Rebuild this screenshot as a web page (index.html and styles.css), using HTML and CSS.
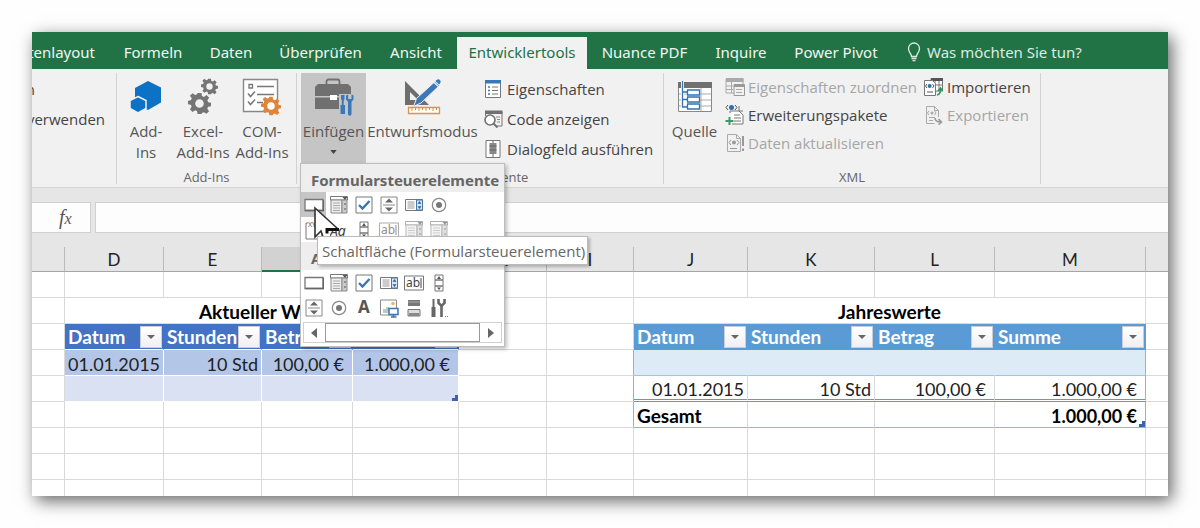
FILE: index.html
```html
<!DOCTYPE html>
<html lang="de">
<head>
<meta charset="utf-8">
<title>Entwicklertools</title>
<link rel="stylesheet" href="styles.css">
</head>
<body>
<svg class="defs" aria-hidden="true">
  <symbol id="i-button" viewBox="0 0 20 20"><path d="M1 4.500h18v11H1z" fill="#fff" stroke="#777" stroke-width="1.300"/><path d="M1.500 15.500h18V5" fill="none" stroke="#666" stroke-width="1.600"/></symbol>
  <symbol id="i-combo" viewBox="0 0 20 20"><path d="M1.500 1.500h17v3.500h-17z" fill="#fff" stroke="#777"/><path d="M2 5h11v13H2z" fill="#eee" stroke="#888"/><path d="M13 5h5v13h-5z" fill="#ccc" stroke="#888"/><path d="M4 8h7M4 10.500h7M4 13h7M4 15.500h7" stroke="#aaa"/><path d="M13.500 2h5l-2.500 3z" fill="#555"/><path d="M15 9h2M15 14h2" stroke="#555"/></symbol>
  <symbol id="i-check" viewBox="0 0 20 20"><path d="M2 2h16v16H2z" fill="#fff" stroke="#777"/><path d="M5 10l3.500 3.500L15.500 6" fill="none" stroke="#3a76b5" stroke-width="2.400"/></symbol>
  <symbol id="i-spin" viewBox="0 0 20 20"><path d="M2 2h16v16H2z" fill="#fff" stroke="#888"/><path d="M4 10h12" stroke="#888"/><path d="M6 7.500h8L10 3.500zM6 12.500h8l-4 4z" fill="#666"/></symbol>
  <symbol id="i-list" viewBox="0 0 20 20"><path d="M1.500 4.500h17v11h-17z" fill="#fff" stroke="#777"/><path d="M3.500 7h7M3.500 9h7M3.500 11h7M3.500 13h7" stroke="#999"/><path d="M12.500 5h6v10h-6z" fill="#d9e6f3" stroke="#4379ad"/><path d="M13.500 8.800h4L15.500 6zM13.500 11.200h4l-2 2.800z" fill="#2d6299"/></symbol>
  <symbol id="i-radio" viewBox="0 0 20 20"><circle cx="10" cy="10" r="6.700" fill="#fff" stroke="#888" stroke-width="1.200"/><circle cx="10" cy="10" r="3" fill="#777"/></symbol>
  <symbol id="i-group" viewBox="0 0 20 20"><path d="M4 3H2v16h16V3h-5" fill="none" stroke="#777"/><text x="4" y="7" class="glyph-xyz">XYZ</text></symbol>
  <symbol id="i-label" viewBox="0 0 20 20"><text x="1" y="16" class="glyph-aa">Aa</text></symbol>
  <symbol id="i-scroll" viewBox="0 0 20 20"><path d="M6 2h8v5H6zM6 7h8v6H6zM6 13h8v5H6z" fill="#fff" stroke="#777"/><path d="M8 6h4l-2-3zM8 14.500h4l-2 2.500z" fill="#555"/></symbol>
  <symbol id="i-text" viewBox="0 0 20 20"><path d="M.500 3h19v14H.5z" fill="#fff" stroke="#777"/><text x="2" y="14" class="glyph-abl">ab</text><path d="M17 5v10" stroke="#444"/></symbol>
  <symbol id="i-a" viewBox="0 0 20 20"><text x="4" y="15" class="glyph-a">A</text></symbol>
  <symbol id="i-image" viewBox="0 0 20 20"><path d="M1.500 2h16v15h-16z" fill="#fff" stroke="#888"/><path d="M4 15v-4h3V9h3v6z" fill="#b9c9c3"/><circle cx="14" cy="5.500" r="1.800" fill="#e9b566"/><path d="M10 10.500h9v6h-9z" fill="#fff" stroke="#3b76b0" stroke-width="1.500"/><path d="M14.500 17v2M12 19h5.500" stroke="#3b76b0" stroke-width="1.500"/></symbol>
  <symbol id="i-toggle" viewBox="0 0 20 20"><path d="M4 2h12v6H4z" fill="#777"/><path d="M4 4h12" stroke="#aaa"/><path d="M4 11.500h12v6.500H4z" fill="#ddd" stroke="#777"/><path d="M5 15h10v3H5z" fill="#888"/></symbol>
  <symbol id="i-tools" viewBox="0 0 20 20"><path d="M3.500 1h2v8h-2z" fill="#666"/><path d="M2.500 9h4v10h-4z" fill="#666"/><path d="M9.500 1v4l3 3 3-3V1M12.500 7v12" fill="none" stroke="#666" stroke-width="2.600"/><path d="M16 18.500h1M18 18.500h1" stroke="#777"/></symbol>
  <symbol id="i-gear" viewBox="-12 -12 24 24"><path d="M-2-11h4l.6 3.300 2 .8 2.800-1.900 2.700 2.800-1.900 2.700.8 2 3 .5v3.600l-3 .6-.9 2 1.900 2.700-2.700 2.700-2.700-1.800-2 .8L2 11h-4l-.6-3.200-2-.8-2.700 1.800L-10 6.100l1.800-2.700-.8-2-3-.6v-3.600l3-.6.9-2-1.900-2.700 2.700-2.700 2.700 1.900 2-.8zM0-4.500A4.500 4.500 0 1 0 0 4.500 4.500 4.500 0 1 0 0-4.500z" fill="currentColor" fill-rule="evenodd"/></symbol>
</svg>

<div class="window">
  <nav class="tabs">
    <button class="tab tab-cut">tenlayout</button>
    <button class="tab">Formeln</button>
    <button class="tab">Daten</button>
    <button class="tab">Überprüfen</button>
    <button class="tab">Ansicht</button>
    <button class="tab active">Entwicklertools</button>
    <button class="tab">Nuance PDF</button>
    <button class="tab">Inquire</button>
    <button class="tab">Power Pivot</button>
    <button class="tab tell-me">
      <svg width="14" height="20" viewBox="0 0 14 20" fill="none" stroke="#dcebe2" stroke-width="1.300"><path d="M4.500 14.500c0-3-3-4-3-8a5.500 5.500 0 0 1 11 0c0 4-3 5-3 8zM4.500 16.500h5M5.500 18.700h3"/></svg>
      Was möchten Sie tun?
    </button>
  </nav>

  <section class="ribbon">
    <div class="group g-code">
      <div class="cut-list"><span>n</span><span>verwenden</span></div>
    </div>

    <div class="group g-addins">
      <div class="tools">
        <button class="big b-add">
          <span class="pic"><svg width="32" height="34" viewBox="0 0 32 34"><path d="M18 1l13 6.500v15L18 30l-13-7V8z" fill="#0c72c6"/><path d="M8 16.500l8 4v8L8 33l-8-4.500v-8z" fill="#0c72c6" stroke="#f1f1f1" stroke-width="1.500"/></svg></span>
          Add-<br>Ins
        </button>
        <button class="big b-excel">
          <span class="pic"><svg width="32" height="38" viewBox="0 0 32 38" color="#757575"><use href="#i-gear" x="1" y="14" width="23" height="23"/><use href="#i-gear" x="14" y="0" width="17" height="17"/></svg></span>
          Excel-<br>Add-Ins
        </button>
        <button class="big b-com">
          <span class="pic"><svg width="40" height="38" viewBox="0 0 40 38"><path d="M1.500 1.500h34v32h-34z" fill="#fff" stroke="#888" stroke-width="1.400"/><path d="M7 6.500h3.500V10H7zM15 8.500h17M15 16.500h17M15 24.500h6" fill="none" stroke="#777" stroke-width="1.300"/><path d="M6 15.500l2.500 3 4.500-5M6 23.500l2.500 3 4.500-5" fill="none" stroke="#777" stroke-width="1.500"/><circle cx="29" cy="28" r="5" fill="#fff"/><g color="#e0843a"><use href="#i-gear" x="19" y="18" width="20" height="20"/></g></svg></span>
          COM-<br>Add-Ins
        </button>
      </div>
      <div class="caption">Add-Ins</div>
    </div>

    <div class="group g-controls">
      <div class="tools">
        <button class="big b-insert pressed">
          <span class="pic"><svg width="40" height="38" viewBox="0 0 40 38"><path d="M12.500 6V3.500a2 2 0 0 1 2-2h9a2 2 0 0 1 2 2V6" fill="none" stroke="#707070" stroke-width="1.800"/><path d="M4 6h30l3 3v9H1V9z" fill="#707070"/><path d="M1 19.500h36V31H1z" fill="#707070"/><path d="M16 17h7v5h-7z" fill="#fff"/><path d="M25 16h15v22H25z" fill="#c5c5c5"/><path d="M27 17h3.500v4l-.8 1.500V27h1.300v9h-4.500v-9h1.300v-4.500L27 21z" fill="#3b78b8"/><path d="M32 17.500v4l2 2.300V36a1.500 1.500 0 0 0 3.500 0V23.800l2-2.300v-4l-2-1v4.500h-3.300v-4.500z" fill="#3b78b8"/></svg></span>
          Einfügen
          <svg class="drop" width="7" height="4" viewBox="0 0 8 5"><path d="M0 0h8L4 5z" fill="#444"/></svg>
        </button>
        <button class="big b-design">
          <span class="pic"><svg width="38" height="38" viewBox="0 0 38 38"><path d="M1 3l24 24H1zM6 14v8h8z" fill="#6e6e6e" fill-rule="evenodd"/><path d="M31 3.500l4.500 4L17 25l-7.500 3.500 3-8z" fill="#3b78b8" stroke="#f1f1f1"/><path d="M32.500 2q2-1.500 3.500 0t0 3.500l-1 1-3.500-3.500z" fill="#3b78b8"/><path d="M30 4.500l5 4.500" stroke="#f1f1f1" stroke-width="1.200"/><path d="M4.500 29.500h31v6h-31z" fill="#fff" stroke="#e39143" stroke-width="1.300"/><path d="M8 30v3M11.500 30v2M15 30v3M18.500 30v2M22 30v3M25.500 30v2M29 30v3M32.500 30v2" stroke="#e39143"/></svg></span>
          Entwurfsmodus
        </button>
        <div class="list">
          <button class="small"><svg width="18" height="20" viewBox="0 0 18 20"><path d="M1.500 2h15v16.500h-15z" fill="#fff" stroke="#777"/><path d="M1 1h16v3.500H1z" fill="#3b76b8"/><path d="M4 8h2M4 11.500h2M4 15h2" stroke="#3b76b8" stroke-width="1.500"/><path d="M8 8h6M8 11.500h6M8 15h6" stroke="#777"/></svg>Eigenschaften</button>
          <button class="small"><svg width="20" height="20" viewBox="0 0 20 20"><path d="M2.500 3h16.500v14h-5M2.500 3v4" fill="none" stroke="#777"/><path d="M2 1.500h17.500V5H2z" fill="#707070"/><path d="M13 8h4M14 10.500h3M14 13h3" stroke="#888"/><circle cx="7" cy="11" r="5" fill="#fff" stroke="#707070" stroke-width="1.600"/><path d="M10.500 14.500l4 4" stroke="#707070" stroke-width="2"/></svg>Code anzeigen</button>
          <button class="small"><svg width="18" height="20" viewBox="0 0 18 20"><path d="M2 1.500h14v17H2z" fill="#fff" stroke="#777"/><path d="M5.500 4h7v11h-7z" fill="#888"/><path d="M9 2v2M9 15v3M5.500 7h7M5.500 11h7" stroke="#666"/></svg>Dialogfeld ausführen</button>
        </div>
      </div>
      <div class="caption">Steuerelemente</div>
    </div>

    <div class="group g-xml">
      <div class="tools">
        <button class="big b-source">
          <span class="pic"><svg width="36" height="32" viewBox="0 0 36 32"><path d="M1.500 1.500h33v29h-33z" fill="#fff" stroke="#888"/><path d="M24 7v23M2 13h32M2 19h32M2 25h32" stroke="#aaa"/><path d="M1 1h34v6H1z" fill="#707070"/><path d="M5.500 0v26h5M5.500 11h5M5.500 18.500h5" fill="none" stroke="#fff" stroke-width="3"/><path d="M5.500 0v26h5M5.500 11h5M5.500 18.500h5" fill="none" stroke="#2f73b5" stroke-width="1.300"/><path d="M10.500 9h12v5h-12zM10.500 16h12v5h-12zM10.500 23h12v5h-12z" fill="#fff" stroke="#2f73b5" stroke-width="1.300"/></svg></span>
          Quelle
        </button>
        <div class="list xml-a">
          <button class="small" disabled><svg width="20" height="20" viewBox="0 0 20 20"><path d="M1 2h17v14H1zM1 9h7M1 12.500h7M6.500 5v11" fill="none" stroke="#aaa"/><path d="M1 1h17.500v4H1z" fill="#aaa"/><path d="M9 7.500h10.500v11H9z" fill="#f1f1f1" stroke="#999"/><path d="M9 9h10.500" stroke="#999" stroke-width="2"/><path d="M11 12.500h6M11 15.500h6" stroke="#aaa"/></svg>Eigenschaften zuordnen</button>
          <button class="small"><svg width="20" height="20" viewBox="0 0 20 20"><path d="M5 8v-2h9l4 4v9H7" fill="#fff" stroke="#777"/><path d="M14 1v5h4" fill="none" stroke="#777"/><path d="M9 10h6M9 13h7M9 16h7" stroke="#777"/><path d="M3 0L1 2.500 3 5M10 0l2 2.500L10 5" fill="none" stroke="#555"/><circle cx="6.500" cy="2.500" r="2.500" fill="#2f6fae"/><path d="M4.500 12v8M.5 16h8" stroke="#3c9a68" stroke-width="2"/></svg>Erweiterungspakete</button>
          <button class="small" disabled><svg width="20" height="20" viewBox="0 0 20 20"><path d="M2.500 1.500h9l4 4v13h-13zM11.500 1.500v4h4" fill="none" stroke="#aaa"/><path d="M6 7L4 9.500 6 12M12 7l2 2.500-2 2.500M5 15.500h7" fill="none" stroke="#999"/><circle cx="9" cy="9.500" r="2" fill="#999"/><path d="M18 3v10M18 15.500v2.500" stroke="#999" stroke-width="2"/></svg>Daten aktualisieren</button>
        </div>
        <div class="list xml-b">
          <button class="small"><svg width="20" height="20" viewBox="0 0 20 20"><path d="M8 1.500h11.500V14H8zM8 8h11M12 4v9M16 4v9" fill="#fff" stroke="#777"/><path d="M8 1h12v3H8z" fill="#555"/><path d="M1.500 3.500h8l3 3v12h-11z" fill="#fff" stroke="#777"/><path d="M4 7L2.500 9 4 11M9.500 7L11 9l-1.500 2M4 15h6" fill="none" stroke="#555"/><circle cx="6.700" cy="9" r="2" fill="#2f6fae"/><path d="M14 18q4-1 3.500-6M15 14l2.500-3 2.500 3" fill="none" stroke="#319560" stroke-width="1.600"/></svg>Importieren</button>
          <button class="small" disabled><svg width="20" height="20" viewBox="0 0 20 20"><path d="M3.500 1.500h8l4 4V12M3.500 1.500v17h8M11.500 1.500v4h4" fill="none" stroke="#aaa"/><path d="M6 6L4.500 8 6 10M11.500 6L13 8l-1.500 2M6 12.500h6M6 15.500h4" fill="none" stroke="#aaa"/><circle cx="9" cy="8" r="1.500" fill="#aaa"/><path d="M12 13q0 4 6 4M15.500 14l3 3-3 2.500" fill="none" stroke="#999" stroke-width="1.600"/></svg>Exportieren</button>
        </div>
      </div>
      <div class="caption">XML</div>
    </div>
  </section>

  <div class="formula">
    <button class="fx" aria-label="Funktion einfügen"><i>f</i><i class="x">x</i></button>
    <input class="formula-input" aria-label="Bearbeitungsleiste">
  </div>

  <table class="sheet">
    <colgroup><col class="c0"><col class="cD"><col class="cE"><col class="cF"><col class="cG"><col class="cH"><col class="cI"><col class="cJ"><col class="cK"><col class="cL"><col class="cM"><col></colgroup>
    <thead>
      <tr><th></th><th>D</th><th>E</th><th class="sel">F</th><th>G</th><th>H</th><th>I</th><th>J</th><th>K</th><th>L</th><th>M</th><th></th></tr>
    </thead>
    <tbody>
      <tr><td></td><td></td><td></td><td></td><td></td><td></td><td></td><td></td><td></td><td></td><td></td><td></td></tr>
      <tr><td></td><td colspan="4" class="title">Aktueller Wert</td><td></td><td></td><td colspan="4" class="title">Jahreswerte</td><td></td></tr>
      <tr>
        <td></td>
        <td class="h1"><div class="head">Datum<button class="filter" aria-label="Datum filtern"></button></div></td>
        <td class="h1"><div class="head">Stunden<button class="filter" aria-label="Stunden filtern"></button></div></td>
        <td class="h1"><div class="head">Betrag<button class="filter" aria-label="Betrag filtern"></button></div></td>
        <td class="h1"><div class="head">Summe<button class="filter" aria-label="Summe filtern"></button></div></td>
        <td></td><td></td>
        <td class="h2"><div class="head">Datum<button class="filter" aria-label="Datum filtern"></button></div></td>
        <td class="h2"><div class="head">Stunden<button class="filter" aria-label="Stunden filtern"></button></div></td>
        <td class="h2"><div class="head">Betrag<button class="filter" aria-label="Betrag filtern"></button></div></td>
        <td class="h2"><div class="head">Summe<button class="filter" aria-label="Summe filtern"></button></div></td>
        <td></td>
      </tr>
      <tr><td></td><td class="a num">01.01.2015</td><td class="a num">10 Std</td><td class="a cur">100,00 €</td><td class="a cur">1.000,00 €</td><td></td><td class="pre"></td><td class="band"></td><td class="band"></td><td class="band"></td><td class="band edge"></td><td></td></tr>
      <tr><td></td><td class="b"></td><td class="b"></td><td class="b"></td><td class="b corner"></td><td></td><td class="pre"></td><td class="num dbl">01.01.2015</td><td class="num dbl">10 Std</td><td class="cur dbl">100,00 €</td><td class="cur dbl edge">1.000,00 €</td><td></td></tr>
      <tr><td></td><td></td><td></td><td></td><td></td><td></td><td class="pre"></td><td class="total name">Gesamt</td><td class="total"></td><td class="total"></td><td class="total cur edge corner">1.000,00 €</td><td></td></tr>
      <tr><td></td><td></td><td></td><td></td><td></td><td></td><td></td><td></td><td></td><td></td><td></td><td></td></tr>
      <tr><td></td><td></td><td></td><td></td><td></td><td></td><td></td><td></td><td></td><td></td><td></td><td></td></tr>
      <tr class="last"><td></td><td></td><td></td><td></td><td></td><td></td><td></td><td></td><td></td><td></td><td></td><td></td></tr>
    </tbody>
  </table>

  <div class="popup">
    <div class="popup-title">Formularsteuerelemente</div>
    <div class="palette">
      <button class="on" aria-label="Schaltfläche"><svg><use href="#i-button"/></svg></button>
      <button aria-label="Kombinationsfeld"><svg><use href="#i-combo"/></svg></button>
      <button aria-label="Kontrollkästchen"><svg><use href="#i-check"/></svg></button>
      <button aria-label="Drehfeld"><svg><use href="#i-spin"/></svg></button>
      <button aria-label="Listenfeld"><svg><use href="#i-list"/></svg></button>
      <button aria-label="Optionsfeld"><svg><use href="#i-radio"/></svg></button>
      <button aria-label="Gruppenfeld"><svg><use href="#i-group"/></svg></button>
      <button aria-label="Bezeichnung"><svg><use href="#i-label"/></svg></button>
      <button aria-label="Bildlaufleiste"><svg><use href="#i-scroll"/></svg></button>
      <button disabled aria-label="Textfeld"><svg><use href="#i-text"/></svg></button>
      <button disabled aria-label="Kombinationsliste"><svg><use href="#i-combo"/></svg></button>
      <button disabled aria-label="Kombinationsdropdown"><svg><use href="#i-combo"/></svg></button>
    </div>
    <div class="popup-title">ActiveX-Steuerelemente</div>
    <div class="palette">
      <button aria-label="Befehlsschaltfläche"><svg><use href="#i-button"/></svg></button>
      <button aria-label="Kombinationsfeld"><svg><use href="#i-combo"/></svg></button>
      <button aria-label="Kontrollkästchen"><svg><use href="#i-check"/></svg></button>
      <button aria-label="Listenfeld"><svg><use href="#i-list"/></svg></button>
      <button aria-label="Textfeld"><svg><use href="#i-text"/></svg></button>
      <button aria-label="Bildlaufleiste"><svg><use href="#i-scroll"/></svg></button>
      <button aria-label="Drehfeld"><svg><use href="#i-spin"/></svg></button>
      <button aria-label="Optionsfeld"><svg><use href="#i-radio"/></svg></button>
      <button aria-label="Bezeichnung"><svg><use href="#i-a"/></svg></button>
      <button aria-label="Bild"><svg><use href="#i-image"/></svg></button>
      <button aria-label="Umschaltfläche"><svg><use href="#i-toggle"/></svg></button>
      <button aria-label="Weitere Steuerelemente"><svg><use href="#i-tools"/></svg></button>
    </div>
    <div class="scrollbar">
      <button aria-label="Nach links"><svg width="7" height="10" viewBox="0 0 7 10"><path d="M6 0v10L0 5z" fill="#666"/></svg></button>
      <span class="track"></span>
      <button aria-label="Nach rechts"><svg width="7" height="10" viewBox="0 0 7 10"><path d="M1 0v10l6-5z" fill="#666"/></svg></button>
    </div>
  </div>
  <svg class="cursor" width="28" height="34" viewBox="0 0 28 34"><path d="M2 2v29l6-6 3 5h6v-6h9z" fill="#fff"/><path d="M10 31l-2-6-6 6V2l23 21" fill="none" stroke="#333" stroke-width="1.600"/><path d="M26 23.500H14v4" fill="none" stroke="#111" stroke-width="3"/></svg>
  <div class="tooltip" role="tooltip">Schaltfläche (Formularsteuerelement)</div>
</div>
</body>
</html>
```
FILE: styles.css
```css
* { box-sizing: border-box; }
body {
  margin: 0;
  padding: 32px;
  background: #fefefe;
  font-family: "Open Sans", "Noto Sans", sans-serif;
  font-size: 15px;
  color: #444;
}
button { font: inherit; color: inherit; background: none; border: 0; padding: 0; margin: 0; }
.defs { position: absolute; width: 0; height: 0; }

.window {
  position: relative;
  background: #fff;
  box-shadow: 4px 5px 16px rgba(0, 0, 0, .6);
}

.tabs {
  display: grid;
  grid-template-columns: 78px 86px 70px 109px 82px 130px 115px 78px 112px 1fr;
  height: 37px;
  background: #217346;
  font-family: "Noto Sans", sans-serif;
  overflow: hidden;
}
.tab { color: #f0f6f2; white-space: nowrap; padding-top: 2px; }
.tab-cut { display: flex; justify-content: flex-end; align-items: center; padding-right: 15px; }
.tab.active { background: #f1f1f1; color: #217346; margin-top: 5px; padding: 0 0 2px; }
.tell-me { display: flex; align-items: center; gap: 6px; padding-left: 15px; color: #dcebe2; }

.ribbon {
  display: flex;
  height: 119px;
  padding-top: 4px;
  background: #f1f1f1;
  border-bottom: 1px solid #d5d5d5;
}
.group {
  display: flex;
  flex-direction: column;
  flex: none;
  height: 111px;
  border-right: 1px solid #d2d2d2;
}
.g-code { width: 85px; overflow: hidden; }
.g-addins { width: 180px; }
.g-controls { width: 367px; }
.g-xml { width: 377px; }
.cut-list {
  display: flex;
  flex-direction: column;
  align-items: flex-end;
  padding: 1px 11px 0 0;
  line-height: 30px;
  white-space: nowrap;
}
.cut-list span:first-child { padding-right: 70px; }
.tools { display: flex; flex: 1; align-items: flex-start; }
.caption { font-size: 13px; line-height: 18px; height: 16px; text-align: center; color: #666; }
.big {
  display: flex;
  flex-direction: column;
  align-items: center;
  flex: none;
  line-height: 21px;
  white-space: nowrap;
  color: #555;
}
.pic { display: flex; align-items: center; justify-content: center; height: 48px; }
.b-add { width: 58px; }
.b-excel { width: 56px; }
.b-com { width: 62px; }
.b-insert { width: 65px; height: 91px; margin-left: 4px; }
.b-design { width: 113px; }
.b-source { width: 61px; }
.pressed { background: #c5c5c5; }
.drop { margin-top: 8px; }
.list { display: flex; flex-direction: column; align-items: flex-start; padding: 1px 0 0 4px; }
.small { display: flex; align-items: center; gap: 4px; height: 30px; white-space: nowrap; }
.small svg { flex: none; width: 20px; }
.small:disabled { color: #a6a6a6; }
.xml-a, .xml-b { padding-top: 0; }
.xml-a { padding-left: 0; width: 198px; }
.xml-b { padding-left: 0; }
.xml-a .small, .xml-b .small { height: 28px; }
.xml-a .small { gap: 3px; }

.formula {
  display: flex;
  gap: 4px;
  height: 59px;
  padding: 14px 0;
  background: #e6e6e6;
}
.fx {
  width: 59px;
  background: #fdfdfd;
  border: 1px solid #d0d0d0;
  border-left: 0;
  font: 20px "Liberation Serif", serif;
  text-align: left;
  padding-left: 27px;
  color: #555;
}
.fx .x { font-size: 16px; }
.formula-input { flex: 1; border: 1px solid #d0d0d0; border-right: 0; background: #fdfdfd; padding: 0 8px; min-width: 0; font: inherit; }

.sheet {
  width: 100%;
  table-layout: fixed;
  border-collapse: separate;
  border-spacing: 0;
  font-family: Lato, sans-serif;
  font-size: 18px;
  line-height: 20px;
  color: #222;
}
.c0 { width: 33px; }
.cD { width: 99px; }
.cE { width: 98px; }
.cF { width: 91px; }
.cG { width: 106px; }
.cH { width: 88px; }
.cI { width: 87px; }
.cJ { width: 114px; }
.cK { width: 127px; }
.cL { width: 120px; }
.cM { width: 151px; }
.sheet th {
  height: 25px;
  padding: 2px 0 0;
  font-size: 17px;
  font-weight: 400;
  background: #e6e6e6;
  border-right: 1px solid #bbb;
  border-bottom: 1px solid #a5a5a5;
}
.sheet th.sel { background: #d2d2d2; border-bottom: 2px solid #217346; }
.sheet td {
  position: relative;
  height: 26px;
  padding: 2px 3px 0;
  white-space: nowrap;
  border-right: 1px solid #d9d9d9;
  border-bottom: 1px solid #d9d9d9;
}
.sheet th:last-child, .sheet td:last-child { border-right: 0; }
.sheet .last td { height: 16px; border-bottom: 0; }
.sheet .title { text-align: center; font-size: 19px; font-weight: 700; color: #000; }
.sheet .h1, .sheet .h2 { padding: 0 1px 0 3px; color: #fff; font-size: 19px; font-weight: 700; }
.sheet .h1 { background: #4472c4; border-color: #4472c4; border-bottom-color: #fff; }
.sheet .h2 { background: #5b9bd5; border-color: #5b9bd5; }
.head { display: flex; align-items: center; justify-content: space-between; height: 25px; }
.filter {
  display: flex;
  align-items: center;
  justify-content: center;
  flex: none;
  width: 22px;
  height: 22px;
  background: linear-gradient(#fff, #f0f0f4);
  border: 1px solid #c9cdd6;
}
.filter::before { content: ""; border: 4px solid transparent; border-top: 4px solid #666; border-bottom: 0; }
.sheet .num { text-align: right; }
.sheet .cur { text-align: right; padding-right: 8px; }
.sheet .a { background: #b4c6e7; border-color: #fff; }
.sheet .b { background: #d9e1f2; border-color: #fff; }
.sheet .band { background: #ddebf7; border-right-color: #ddebf7; border-bottom-color: #9dc3e6; }
.sheet .pre, .sheet .edge { border-right-color: #8ab6df; }
.sheet .dbl { border-bottom: 3px double #5b9bd5; }
.sheet .total { font-weight: 700; color: #000; border-bottom-color: #8ab6df; }
.sheet .name { font-size: 19px; }
.corner::after {
  content: "";
  position: absolute;
  right: 0;
  bottom: 0;
  width: 6px;
  height: 6px;
  background: linear-gradient(#3f62ae, #3f62ae) right / 3px 6px no-repeat, linear-gradient(#3f62ae, #3f62ae) bottom / 6px 3px no-repeat;
}

.popup {
  position: absolute;
  left: 268px;
  top: 131px;
  width: 205px;
  padding-bottom: 1px;
  background: #fff;
  border: 1px solid #bdbdbd;
  box-shadow: 2px 2px 4px rgba(0, 0, 0, .25);
}
.popup-title {
  height: 28px;
  line-height: 32px;
  padding-left: 10px;
  background: #eee;
  color: #666;
  font-family: "Noto Sans", sans-serif;
  font-weight: 700;
  white-space: nowrap;
}
.palette { display: grid; grid-template-columns: repeat(6, 25px); grid-auto-rows: 25px; }
.palette button { display: flex; align-items: center; justify-content: center; }
.palette button:disabled { opacity: .6; }
.palette svg { width: 20px; height: 20px; }
.palette .on { background: #c5c5c5; }
.glyph-xyz { font: 7px "Noto Sans", sans-serif; fill: #555; }
.glyph-aa { font: italic 14px "Noto Sans", sans-serif; fill: #444; }
.glyph-abl { font: 12px "Noto Sans", sans-serif; fill: #444; }
.glyph-a { font: bold 17px "Noto Sans", sans-serif; fill: #555; }
.scrollbar { display: flex; height: 21px; margin: 2px; border: 1px solid #d0d0d0; }
.scrollbar button { display: flex; align-items: center; justify-content: center; width: 21px; }
.track { flex: 1; border: 1px solid #999; }

.cursor { position: absolute; left: 281px; top: 174px; }
.tooltip {
  position: absolute;
  left: 285px;
  top: 204px;
  height: 29px;
  padding: 0 2px 0 4px;
  line-height: 28px;
  white-space: nowrap;
  color: #666;
  background: #fff;
  border: 1px solid #bbb;
  box-shadow: 2px 2px 3px rgba(0, 0, 0, .25);
}
```
